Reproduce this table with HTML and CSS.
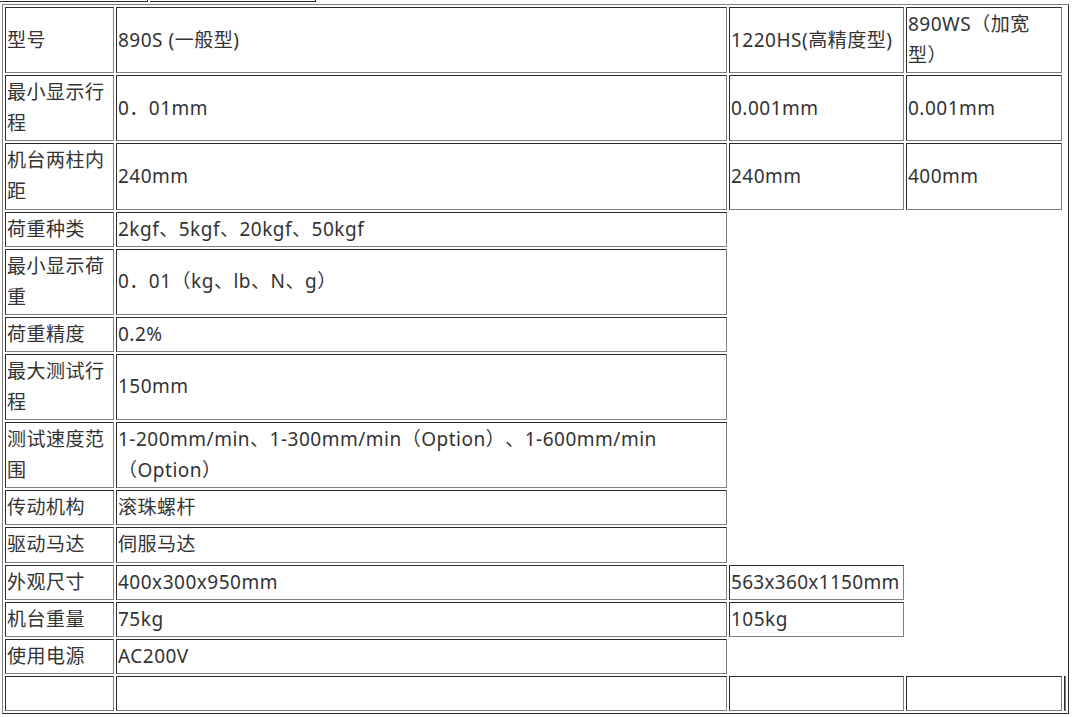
FILE: index.html
```html
<!DOCTYPE html>
<html lang="zh-CN">
<head>
<meta charset="utf-8">
<title>规格参数</title>
<link rel="stylesheet" href="styles.css">
</head>
<body>
<div class="prev">
  <span class="prev-cell prev-a"></span>
  <span class="prev-cell prev-b"></span>
</div>
<table class="spec">
  <tr>
    <td class="c1">型号</td>
    <td class="c2">890S (一般型)</td>
    <td class="c3">1220HS(高精度型)</td>
    <td class="c4">890WS（加宽型）</td>
  </tr>
  <tr>
    <td>最小显示行程</td>
    <td>0．01mm</td>
    <td>0.001mm</td>
    <td>0.001mm</td>
  </tr>
  <tr>
    <td>机台两柱内距</td>
    <td>240mm</td>
    <td>240mm</td>
    <td>400mm</td>
  </tr>
  <tr>
    <td>荷重种类</td>
    <td>2kgf、5kgf、20kgf、50kgf</td>
  </tr>
  <tr>
    <td>最小显示荷重</td>
    <td>0．01（kg、lb、N、g）</td>
  </tr>
  <tr>
    <td>荷重精度</td>
    <td>0.2%</td>
  </tr>
  <tr>
    <td>最大测试行程</td>
    <td>150mm</td>
  </tr>
  <tr>
    <td>测试速度范围</td>
    <td>1-200mm/min、1-300mm/min（Option）、1-600mm/min（Option）</td>
  </tr>
  <tr>
    <td>传动机构</td>
    <td>滚珠螺杆</td>
  </tr>
  <tr>
    <td>驱动马达</td>
    <td>伺服马达</td>
  </tr>
  <tr>
    <td>外观尺寸</td>
    <td>400x300x950mm</td>
    <td class="nowrap">563x360x1150mm</td>
  </tr>
  <tr>
    <td>机台重量</td>
    <td>75kg</td>
    <td>105kg</td>
  </tr>
  <tr>
    <td>使用电源</td>
    <td>AC200V</td>
  </tr>
  <tr>
    <td>&nbsp;</td>
    <td>&nbsp;</td>
    <td>&nbsp;</td>
    <td>&nbsp;</td>
    <td class="c5"></td>
  </tr>
</table>
</body>
</html>
```

FILE: styles.css
```css
html, body {
  margin: 0;
  padding: 0;
  background: #ffffff;
}

body {
  font-family: "Noto Sans", "Noto Sans CJK SC", sans-serif;
  color: #333333;
}

.prev {
  display: flex;
  height: 2px;
}

.prev-cell {
  display: block;
  box-sizing: border-box;
  height: 2px;
  border-right: 1px solid #2c2c2c;
  border-bottom: 1px solid #2c2c2c;
}

.prev-a {
  width: 148px;
}

.prev-b {
  width: 166px;
  margin-left: 2px;
}

.spec {
  margin: 2px 0 0 2px;
  width: 1067px;
  table-layout: fixed;
  border-collapse: separate;
  border-spacing: 2px;
  border: 1px outset #808080;
  font-size: 19px;
  line-height: 31.1px;
  letter-spacing: 0.5px;
  text-spacing-trim: space-all;
}

.spec td {
  box-sizing: border-box;
  border: 1px inset #808080;
  padding: 1px;
  vertical-align: middle;
  text-align: left;
  word-break: normal;
  overflow-wrap: break-word;
}

.spec td.nowrap {
  white-space: nowrap;
  letter-spacing: 0.3px;
}

.spec td.c1 { width: 109px; }
.spec td.c2 { width: 611px; }
.spec td.c3 { width: 175px; }
.spec td.c4 { width: 156px; }
.spec td.c5 { padding: 0; }
```
